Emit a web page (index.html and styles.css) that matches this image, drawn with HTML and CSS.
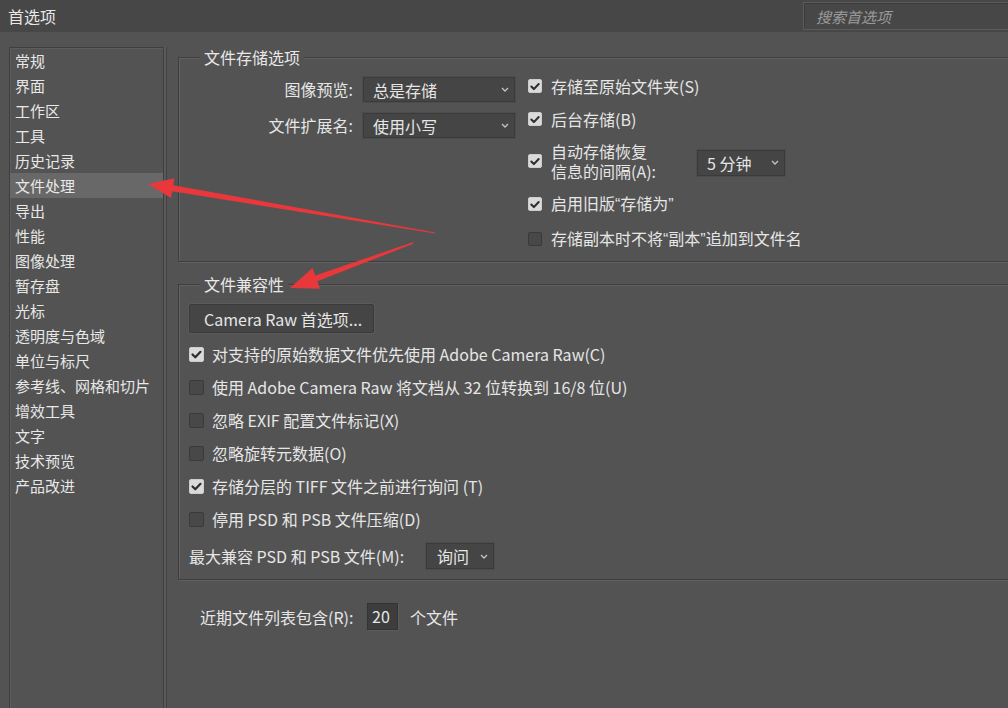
FILE: index.html
```html
<!DOCTYPE html>
<html lang="zh-CN">
<head>
<meta charset="utf-8">
<title>首选项</title>
<link rel="stylesheet" href="styles.css">
</head>
<body>
<header class="titlebar">
  <span class="title">首选项</span>
  <div class="search"><span class="placeholder">搜索首选项</span></div>
</header>
<div class="main">
  <nav class="sidebar">
    <div class="nav-item">常规</div>
    <div class="nav-item">界面</div>
    <div class="nav-item">工作区</div>
    <div class="nav-item">工具</div>
    <div class="nav-item">历史记录</div>
    <div class="nav-item selected">文件处理</div>
    <div class="nav-item">导出</div>
    <div class="nav-item">性能</div>
    <div class="nav-item">图像处理</div>
    <div class="nav-item">暂存盘</div>
    <div class="nav-item">光标</div>
    <div class="nav-item">透明度与色域</div>
    <div class="nav-item">单位与标尺</div>
    <div class="nav-item">参考线、网格和切片</div>
    <div class="nav-item">增效工具</div>
    <div class="nav-item">文字</div>
    <div class="nav-item">技术预览</div>
    <div class="nav-item">产品改进</div>
  </nav>
  <section class="content">
    <fieldset class="group group-save">
      <legend>文件存储选项</legend>
      <div class="save-cols">
        <div class="save-left">
          <span class="field-label">图像预览:</span>
          <div class="select sel-wide"><span>总是存储</span><svg class="chev" width="8" height="5" viewBox="0 0 8 5"><path d="M1 1 L4 4 L7 1"/></svg></div>
          <span class="field-label">文件扩展名:</span>
          <div class="select sel-wide"><span>使用小写</span><svg class="chev" width="8" height="5" viewBox="0 0 8 5"><path d="M1 1 L4 4 L7 1"/></svg></div>
        </div>
        <div class="save-right">
          <div class="check-row"><span class="cb on"><svg width="13" height="13" viewBox="0 0 13 13"><path d="M2.5 6.5 L5.3 9.3 L10.5 3.8"/></svg></span><span>存储至原始文件夹(S)</span></div>
          <div class="check-row"><span class="cb on"><svg width="13" height="13" viewBox="0 0 13 13"><path d="M2.5 6.5 L5.3 9.3 L10.5 3.8"/></svg></span><span>后台存储(B)</span></div>
          <div class="check-row"><span class="cb on"><svg width="13" height="13" viewBox="0 0 13 13"><path d="M2.5 6.5 L5.3 9.3 L10.5 3.8"/></svg></span><span class="multi-label">自动存储恢复<br>信息的间隔(A):</span><div class="select sel-min"><span>5 分钟</span><svg class="chev" width="8" height="5" viewBox="0 0 8 5"><path d="M1 1 L4 4 L7 1"/></svg></div></div>
          <div class="check-row"><span class="cb on"><svg width="13" height="13" viewBox="0 0 13 13"><path d="M2.5 6.5 L5.3 9.3 L10.5 3.8"/></svg></span><span>启用旧版<span class="q">“</span>存储为<span class="q">”</span></span></div>
          <div class="check-row"><span class="cb"></span><span>存储副本时不将<span class="q">“</span>副本<span class="q">”</span>追加到文件名</span></div>
        </div>
      </div>
    </fieldset>
    <fieldset class="group group-compat">
      <legend>文件兼容性</legend>
      <div class="compat-body">
        <button class="btn" type="button">Camera Raw 首选项...</button>
        <div class="check-list">
          <div class="check-row"><span class="cb on"><svg width="13" height="13" viewBox="0 0 13 13"><path d="M2.5 6.5 L5.3 9.3 L10.5 3.8"/></svg></span><span>对支持的原始数据文件优先使用 Adobe Camera Raw(C)</span></div>
          <div class="check-row"><span class="cb"></span><span>使用 Adobe Camera Raw 将文档从 32 位转换到 16/8 位(U)</span></div>
          <div class="check-row"><span class="cb"></span><span>忽略 EXIF 配置文件标记(X)</span></div>
          <div class="check-row"><span class="cb"></span><span>忽略旋转元数据(O)</span></div>
          <div class="check-row"><span class="cb on"><svg width="13" height="13" viewBox="0 0 13 13"><path d="M2.5 6.5 L5.3 9.3 L10.5 3.8"/></svg></span><span>存储分层的 TIFF 文件之前进行询问 (T)</span></div>
          <div class="check-row"><span class="cb"></span><span>停用 PSD 和 PSB 文件压缩(D)</span></div>
        </div>
        <div class="compat-row">
          <span class="compat-label">最大兼容 PSD 和 PSB 文件(M):</span>
          <div class="select sel-ask"><span>询问</span><svg class="chev" width="8" height="5" viewBox="0 0 8 5"><path d="M1 1 L4 4 L7 1"/></svg></div>
        </div>
      </div>
    </fieldset>
    <div class="recent-row">
      <span class="recent-label">近期文件列表包含(R):</span>
      <span class="num-input">20</span>
      <span class="recent-unit">个文件</span>
    </div>
  </section>
</div>
<svg class="arrows" width="1008" height="708" viewBox="0 0 1008 708">
  <polygon points="148,184 174.4,178.3 173.2,185.2 435.1,232.4 434.9,233.6 172.2,191.2 171,198.1"/>
  <polygon points="290,288 312.5,268.1 315.3,275.6 412.7,242.2 413.3,243.8 317.3,281.2 320.1,288.7"/>
</svg>
</body>
</html>
```
FILE: styles.css
```css
* { box-sizing: border-box; }
html, body { margin: 0; padding: 0; }
body {
  width: 1008px;
  height: 708px;
  overflow: hidden;
  position: relative;
  background: #535353;
  color: #e6e6e6;
  font-family: "Noto Sans CJK SC", "Microsoft YaHei", sans-serif;
  font-size: 16px;
}

.titlebar {
  height: 32px;
  background: #474747;
  display: flex;
  align-items: center;
  padding-left: 8px;
}
.title { font-size: 16px; line-height: 22px; color: #e8e8e8; }
.search {
  margin-left: auto;
  margin-right: -8px;
  width: 213px;
  height: 28px;
  border: 1px solid #5c5c5c;
  background: #474747;
  box-shadow: inset 1px 1px 0 #3c3c3c;
  display: flex;
  align-items: center;
  padding-left: 12px;
}
.placeholder { font-style: italic; font-size: 15px; color: #9a9a9a; }

.main { display: flex; height: 676px; }

.sidebar {
  flex: none;
  width: 155px;
  margin: 15px 0 0 9px;
  border: 1px solid #3f3f3f;
  border-bottom: none;
  box-shadow: inset 1px 1px 0 #5d5d5d, 2px 0 0 #5a5a5a, 3px 0 0 #424242;
  font-size: 15px;
}
.nav-item {
  height: 25px;
  line-height: 25px;
  padding-left: 5px;
  white-space: nowrap;
  color: #e8e8e8;
}
.nav-item.selected { background: #686868; }

.content {
  flex: none;
  width: 870px;
  margin-left: 14px;
  padding-top: 14px;
}

.group {
  margin: 0;
  padding: 0;
  min-width: 0;
  border: 1px solid #3e3e3e;
  box-shadow: inset 1px 1px 0 #616161, 1px 1px 0 #616161;
}
.group legend {
  margin-left: 21px;
  padding: 0 4px;
  line-height: 22px;
  font-size: 16px;
  background: #535353;
  color: #e8e8e8;
}

.group-save { padding-bottom: 10px; }
.save-cols { display: flex; align-items: flex-start; }
.save-left {
  flex: none;
  width: 336px;
  padding-top: 9px;
  display: grid;
  grid-template-columns: auto 152px;
  justify-content: end;
  column-gap: 10px;
  row-gap: 11px;
  align-items: center;
}
.field-label { line-height: 25px; text-align: right; white-space: nowrap; }

.select {
  height: 25px;
  background: #454545;
  border: 1px solid #3b3b3b;
  box-shadow: 0 0 0 1px #4c4c4c;
  display: flex;
  align-items: center;
  justify-content: space-between;
  padding: 0 5px 0 9px;
  line-height: 22px;
  white-space: nowrap;
}
.chev { flex: none; }
.chev path { fill: none; stroke: #c4c4c4; stroke-width: 1.3; }
.sel-wide { width: 152px; }
.sel-min { width: 88px; height: 26px; padding-left: 9px; padding-right: 5px; margin-top: 3px; }
.sel-ask { width: 68px; height: 26px; padding-left: 10px; padding-right: 5px; }

.save-right {
  margin-left: 13px;
  padding-top: 7px;
  display: flex;
  flex-direction: column;
  gap: 11px;
}
.check-row {
  display: flex;
  align-items: center;
  gap: 9px;
  line-height: 22px;
  white-space: nowrap;
}
.q { font-family: "Liberation Sans", sans-serif; }
.cb {
  flex: none;
  width: 14px;
  height: 14px;
  border-radius: 2px;
  background: #484848;
  border: 1px solid #3a3a3a;
  display: flex;
  align-items: center;
  justify-content: center;
}
.cb.on { background: #dadada; border-color: #cdcdcd; }
.cb svg path { fill: none; stroke: #2e2e2e; stroke-width: 2.2; stroke-linecap: round; stroke-linejoin: round; }
.multi-label { width: 137px; line-height: 20px; }

.group-compat { margin-top: 11px; padding-bottom: 10px; }
.compat-body { padding: 0 10px; }
.btn {
  display: block;
  margin-top: 9px;
  width: 185px;
  height: 29px;
  background: #454545;
  border: 1px solid #3a3a3a;
  box-shadow: 0 0 0 1px #5a5a5a;
  border-radius: 2px;
  color: #e6e6e6;
  font-family: inherit;
  font-size: 16px;
  text-align: left;
  padding: 0 0 0 14px;
  line-height: 22px;
}
.check-list {
  margin-top: 10px;
  display: flex;
  flex-direction: column;
  gap: 11px;
}
.check-list .check-row { gap: 8px; }
.check-list .cb { width: 15px; height: 15px; }
.compat-row {
  margin-top: 13px;
  display: flex;
  align-items: center;
  height: 26px;
}
.compat-label { width: 237px; white-space: nowrap; line-height: 22px; }

.recent-row {
  margin-top: 23px;
  display: flex;
  align-items: center;
  padding-left: 22px;
  height: 27px;
}
.recent-label { width: 167px; white-space: nowrap; }
.num-input {
  width: 31px;
  height: 27px;
  background: #3d3d3d;
  border: 1px solid #333;
  box-shadow: 1px 1px 0 #5c5c5c;
  padding-left: 4px;
  line-height: 25px;
}
.recent-unit { margin-left: 12px; }

.arrows {
  position: absolute;
  left: 0;
  top: 0;
  pointer-events: none;
}
.arrows polygon { fill: #e8383c; }
```
